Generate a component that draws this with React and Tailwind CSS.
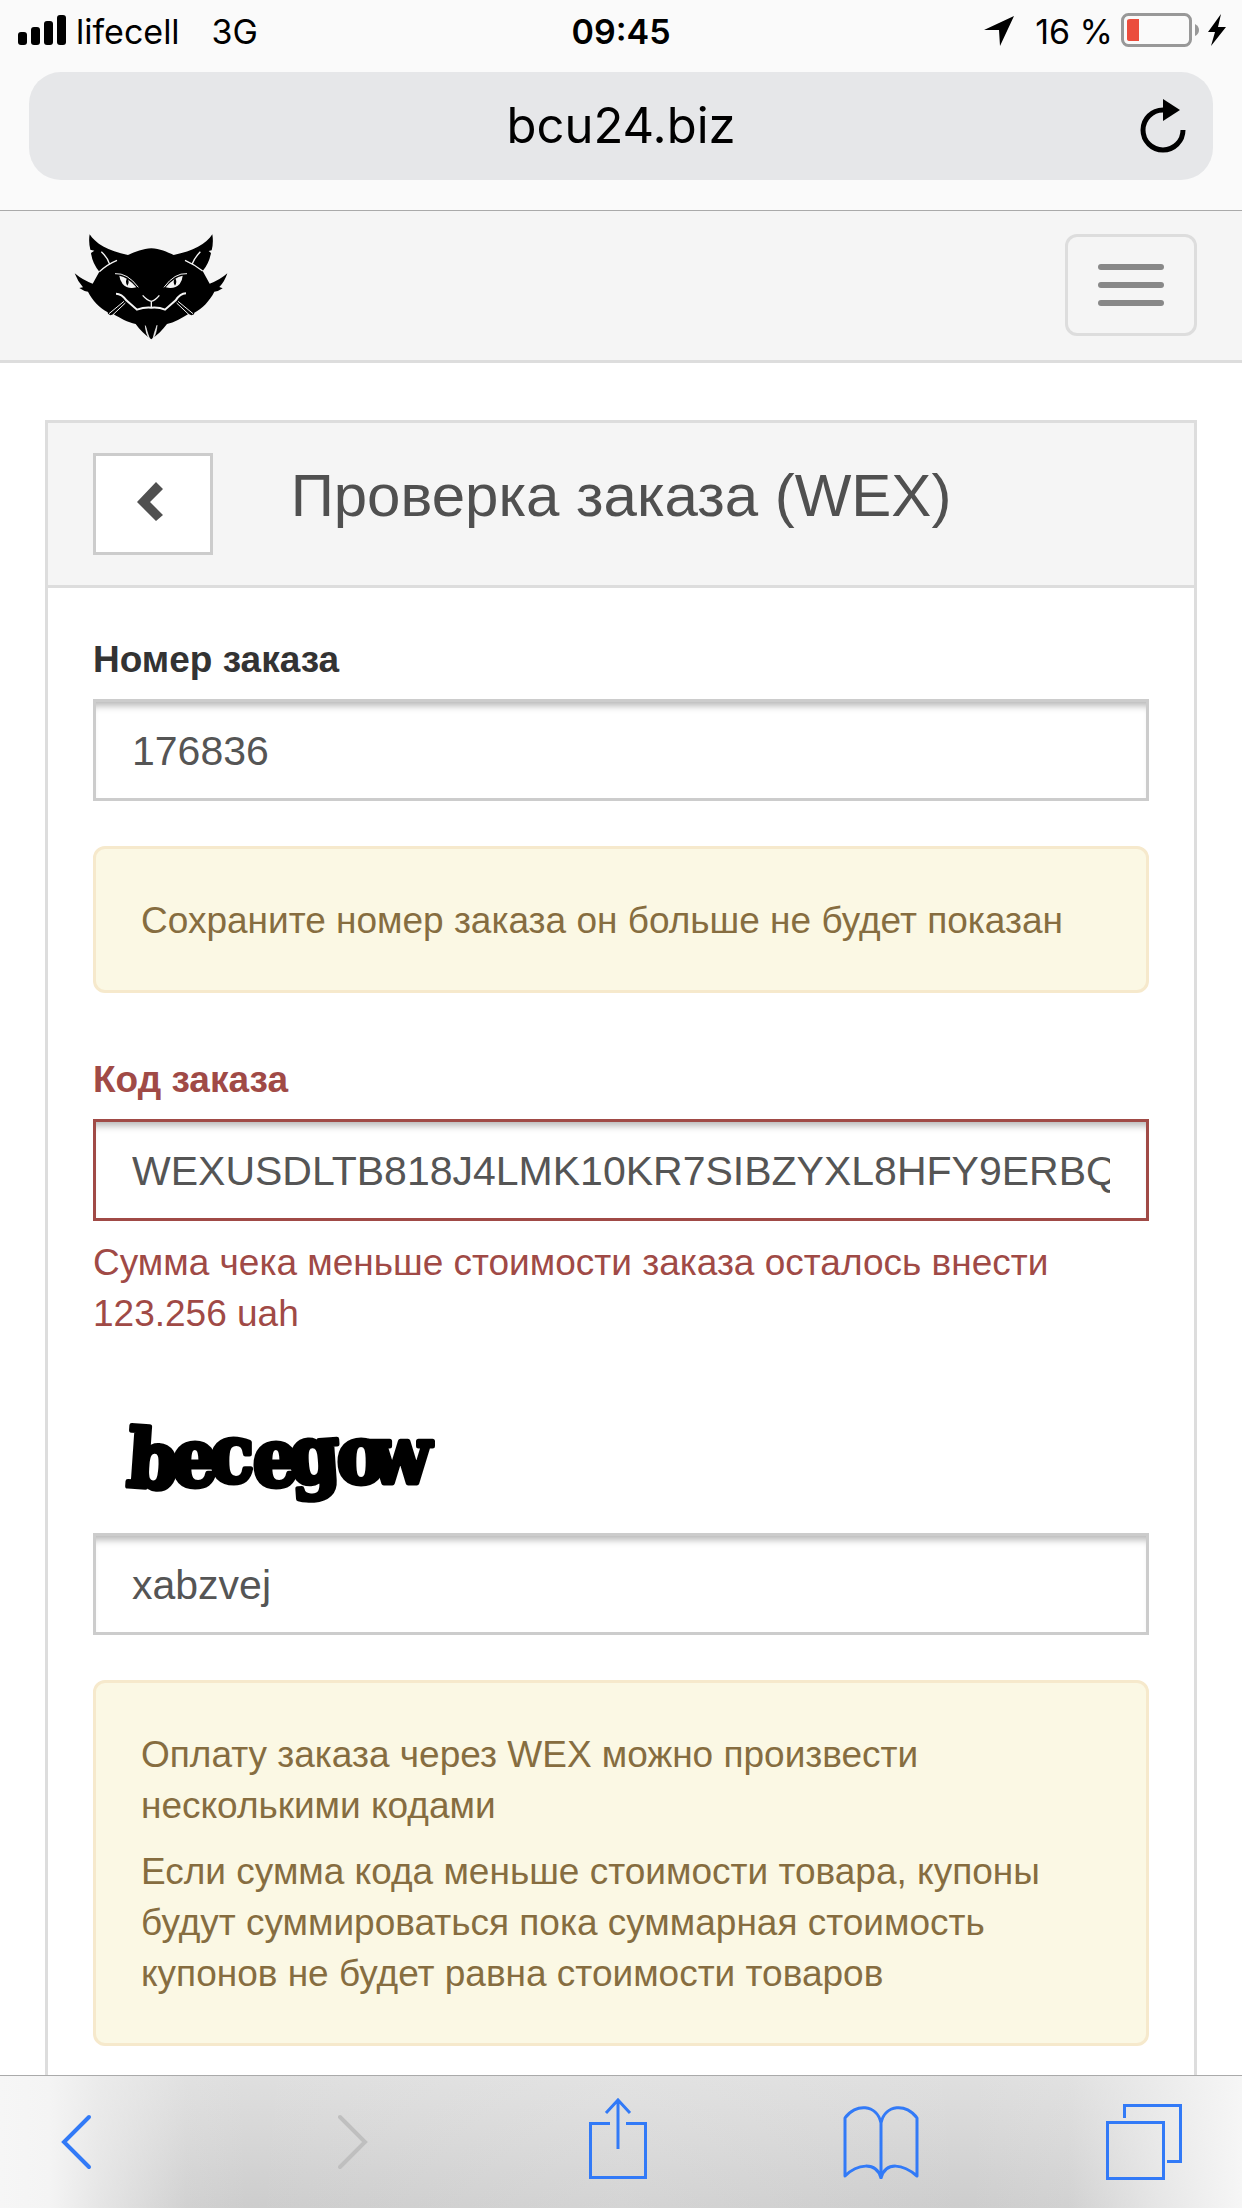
import React from "react";

const field =
  "block h-[102px] w-full border-[3px] bg-white px-9 pt-0.5 text-[41px] text-[#555] outline-none shadow-[inset_0_9px_7px_-5px_rgba(0,0,0,0.28)]";

function StatusBar() {
  return (
    <div className="grid h-[72px] grid-cols-3 items-start px-[15px] pt-[9px] font-['Inter','Roboto',sans-serif] text-[34px] leading-[46px] text-black">
      <div className="flex items-center">
        <svg className="mr-2 ml-[3px] h-[46px] w-[50px] shrink-0" viewBox="0 0 50 46" aria-hidden="true">
          <rect x="0" y="23" width="9" height="13" rx="3" />
          <rect x="13" y="18" width="9" height="18" rx="3" />
          <rect x="26" y="12" width="9" height="24" rx="3" />
          <rect x="39" y="6" width="9" height="30" rx="3" />
        </svg>
        <span>lifecell</span>
        <span className="ml-8">3G</span>
      </div>
      <div className="text-center font-semibold">09:45</div>
      <div className="flex items-center justify-end">
        <svg className="mr-5 h-[46px] w-8" viewBox="0 0 32 46" aria-hidden="true">
          <path d="M1 21 L31 7 L17 37 L16 21 Z" />
        </svg>
        <span>16 %</span>
        <svg className="ml-2 h-[46px] w-[106px]" viewBox="0 0 106 46" aria-hidden="true">
          <rect x="1.500" y="5.500" width="68" height="31" rx="6" fill="none" stroke="#989898" strokeWidth="3" />
          <path d="M6 12 q0-2 3-2 h9 v22 h-9 q-3 0-3-2z" fill="#eb4d3d" />
          <path d="M74 15 q4 2 4 6 t-4 6z" fill="#989898" />
          <path d="M100 5 L87 23 h7 L90 37 L105 18 h-8 Z" />
        </svg>
      </div>
    </div>
  );
}

function BrowserHeader() {
  return (
    <header className="border-b border-[#aaa] bg-[#fafafa]">
      <StatusBar />
      <div className="mx-[29px] mb-[30px] grid h-[108px] grid-cols-[60px_1fr_60px] items-center rounded-[32px] bg-[#e6e7e9] px-5">
        <span />
        <span className="text-center font-['Inter','Roboto',sans-serif] text-[49px] leading-[60px] text-black">bcu24.biz</span>
        <button type="button" aria-label="Обновить" className="flex justify-center">
          <svg className="h-[56px] w-[50px]" viewBox="0 0 50 56" fill="none" aria-hidden="true">
            <path d="M25 12 A 20 20 0 1 0 45 32" stroke="#000" strokeWidth="5" />
            <path d="M25 1 L42 12 L25 23 Z" fill="#000" />
          </svg>
        </button>
      </div>
    </header>
  );
}

function CatLogo() {
  return (
    <svg className="h-[108px] w-[157px]" viewBox="40 41 471 324" aria-hidden="true">
      <path
        d="M90 42 C106 68 145 93 205 104 C228 94 250 85 275 84 C300 85 322 95 342 104 C400 93 440 70 458 42 Q462 68 456 90 L447 92 L454 98 Q448 130 429 152 L450 190 Q481 179 503 159 Q495 184 479 200 L489 204 Q477 213 464 214 C450 242 428 264 404 277 L403 282 L396 285 L386 281 C367 293 343 307 322 311 C309 329 292 345 275 357 C257 344 240 328 228 311 C204 307 181 293 162 282 L152 285 L145 280 L144 276 C120 262 98 241 85 214 Q73 213 59 203 L70 201 Q54 183 45 159 Q70 180 99 190 L119 154 Q98 129 94 98 L104 91 L92 88 Q86 63 90 42 Z"
        fill="#000"
      />
      <g fill="none" stroke="#f5f5f5" strokeWidth="4">
        <path d="M119 154 Q143 132 172 120 M125 94 Q145 113 150 132 M429 152 Q404 132 376 120 M422 94 Q404 113 397 132" />
        <path d="M166 160 Q203 157 236 201 M382 160 Q345 157 313 201" strokeWidth="3" />
        <path d="M169 220 Q186 220 200 240 L232 268 Q254 260 275 262 Q298 260 316 268 L348 240 Q361 220 379 219" strokeWidth="6" />
        <path d="M249 225 Q262 240 275 243 Q287 240 299 225 M275 242 V262" />
        <path d="M193 243 L148 280 M197 248 L159 284 M355 243 L400 280 M351 248 L389 284" strokeWidth="3" />
      </g>
      <g fill="#f5f5f5">
        <path d="M179 166 Q204 170 230 201 Q203 207 189 191 Q181 181 179 166 Z" />
        <path d="M369 166 Q344 170 318 201 Q345 207 360 191 Q368 181 369 166 Z" />
        <path d="M257 316 Q258 340 270 357 Q264 340 257 316 M292 315 Q290 342 280 355 Q283 339 292 315" stroke="#f5f5f5" strokeWidth="2" />
      </g>
      <path d="M203 173 Q195 184 203 196 Q211 185 203 173 M346 173 Q338 185 346 196 Q354 184 346 173" fill="#000" />
    </svg>
  );
}

function Navbar() {
  return (
    <nav className="flex items-start justify-between border-b-[3px] border-[#ddd] bg-[#f5f5f5] pt-[23px] pr-[45px] pb-6 pl-[73px]">
      <a href="#" aria-label="BCU24" className="-mb-1.5 block">
        <CatLogo />
      </a>
      <button
        type="button"
        aria-label="Меню"
        className="flex h-[102px] w-[132px] flex-col items-center gap-3 rounded-xl border-[3px] border-[#ddd] pt-[27px]"
      >
        <span className="h-1.5 w-[66px] rounded-[3px] bg-[#888]" />
        <span className="h-1.5 w-[66px] rounded-[3px] bg-[#888]" />
        <span className="h-1.5 w-[66px] rounded-[3px] bg-[#888]" />
      </button>
    </nav>
  );
}

function Notice({ children }) {
  return (
    <div className="mt-[45px] space-y-[15px] rounded-xl border-[3px] border-[#f6e9cc] bg-[#fbf8e4] px-[45px] pt-[46px] pb-11 text-[#866d40]">
      {children}
    </div>
  );
}

function Captcha() {
  return (
    <svg className="mt-11 block h-[150px] w-[360px]" viewBox="0 0 360 150" role="img" aria-label="becegow">
      <text
        x="33 79 117 160 198 244 276"
        y="103 103 99 103 101 100 100"
        rotate="4 0 0 0 -4 0 0"
        className="font-['DejaVu_Serif_Condensed','DejaVu_Serif','Liberation_Serif',serif] text-[80px] font-bold"
        stroke="#000"
        strokeWidth="5"
        strokeLinejoin="round"
      >
        becegow
      </text>
    </svg>
  );
}

function OrderPanel() {
  return (
    <section className="flex-1 border-x-[3px] border-t-[3px] border-[#ddd] bg-white">
      <div className="grid grid-cols-[120px_1fr_120px] items-start border-b-[3px] border-[#ddd] bg-[#f5f5f5] px-[45px] py-[30px]">
        <button
          type="button"
          aria-label="Назад"
          className="flex h-[102px] items-center justify-center border-[3px] border-[#ccc] bg-white pr-1.5 pb-1"
        >
          <svg className="h-[40px] w-[28px]" viewBox="0 0 28 40" aria-hidden="true">
            <path d="M20 0 L27 7 L14 20 L27 33 L20 39 L1 20 Z" fill="#505050" />
          </svg>
        </button>
        <h1 className="pt-2.5 text-center text-[60px] leading-[66px] text-[#505050]">Проверка заказа (WEX)</h1>
      </div>
      <form className="px-[45px] pt-[46px] pb-7" onSubmit={(e) => e.preventDefault()}>
        <label htmlFor="order" className="mb-3.5 block font-bold">
          Номер заказа
        </label>
        <input id="order" className={field + " border-[#ccc]"} defaultValue="176836" />
        <Notice>
          <p>Сохраните номер заказа он больше не будет показан</p>
        </Notice>
        <label htmlFor="code" className="mt-[61px] mb-3.5 block font-bold text-[#a04a46]">
          Код заказа
        </label>
        <input
          id="code"
          className={field + " border-[#a04a46]"}
          defaultValue="WEXUSDLTB818J4LMK10KR7SIBZYXL8HFY9ERBQ"
          aria-describedby="code-help"
        />
        <p id="code-help" className="mt-4 text-[#a04a46]">
          Сумма чека меньше стоимости заказа осталось внести 123.256 uah
        </p>
        <Captcha />
        <input aria-label="Код с картинки" className={field + " border-[#ccc]"} defaultValue="xabzvej" />
        <Notice>
          <p>Оплату заказа через WEX можно произвести несколькими кодами</p>
          <p>
            Если сумма кода меньше стоимости товара, купоны будут суммироваться пока суммарная стоимость купонов не будет
            равна стоимости товаров
          </p>
        </Notice>
      </form>
    </section>
  );
}

const tool = "flex h-20 w-20 items-center justify-center";

function Toolbar() {
  return (
    <footer className="flex h-[133px] shrink-0 items-center justify-between border-t border-[#aaa] bg-[linear-gradient(90deg,#f6f6f6_0%,#f4f4f4_4%,rgba(240,240,240,0.7)_8%,rgba(240,240,240,0.12)_15%,rgba(240,240,240,0)_20%,rgba(240,240,240,0.2)_50%,rgba(240,240,240,0)_78%,rgba(240,240,240,0.12)_86%,rgba(240,240,240,0.7)_93%,#f6f6f6_100%),linear-gradient(#dfdfdf,#cdcdcd)] pr-[58px] pl-[37px]">
      <button type="button" aria-label="Назад" className="flex h-20 w-[94px] items-center pl-6">
        <svg className="h-[56px] w-[32px]" viewBox="0 0 32 56" fill="none" stroke="#327af7" strokeWidth="4" strokeLinecap="round">
          <path d="M28 3 L3 28 L28 53" />
        </svg>
      </button>
      <button type="button" aria-label="Вперёд" disabled className={tool}>
        <svg className="h-[56px] w-[32px]" viewBox="0 0 32 56" fill="none" stroke="#bfbfbf" strokeWidth="4" strokeLinecap="round">
          <path d="M2 3 L27 28 L2 53" />
        </svg>
      </button>
      <button type="button" aria-label="Поделиться" className={tool}>
        <svg className="h-[88px] w-[58px] shrink-0" viewBox="0 0 58 88" fill="none" stroke="#327af7" strokeWidth="3">
          <path d="M21 25.500 H1.500 V79.500 H56.500 V25.500 H37 M29 2 V51 M17 15 L29 2 L41 15" />
        </svg>
      </button>
      <button type="button" aria-label="Закладки" className={tool}>
        <svg className="h-[74px] w-[76px]" viewBox="0 0 76 74" fill="none" stroke="#327af7" strokeWidth="3" strokeLinejoin="round">
          <path d="M38 18 C34 -1 12 -2 2 13 V71 C14 59 33 56 38 73 C43 56 60 59 74 71 V13 C64 -2 42 -1 38 18 V73" />
        </svg>
      </button>
      <button type="button" aria-label="Вкладки" className={tool}>
        <svg className="h-[76px] w-[76px]" viewBox="0 0 76 76" fill="none" stroke="#327af7" strokeWidth="3">
          <path d="M1.500 18.500 H57.500 V74.500 H1.500 Z M18.500 14 V1.500 H74.500 V57.500 H61" />
        </svg>
      </button>
    </footer>
  );
}

export default function App() {
  return (
    <div className="flex min-h-screen flex-col bg-white font-['Liberation_Sans',Arial,sans-serif] text-[37px] leading-[51px] text-[#333]">
      <BrowserHeader />
      <Navbar />
      <main className="flex flex-1 flex-col px-[45px] pt-[57px]">
        <OrderPanel />
      </main>
      <Toolbar />
    </div>
  );
}
